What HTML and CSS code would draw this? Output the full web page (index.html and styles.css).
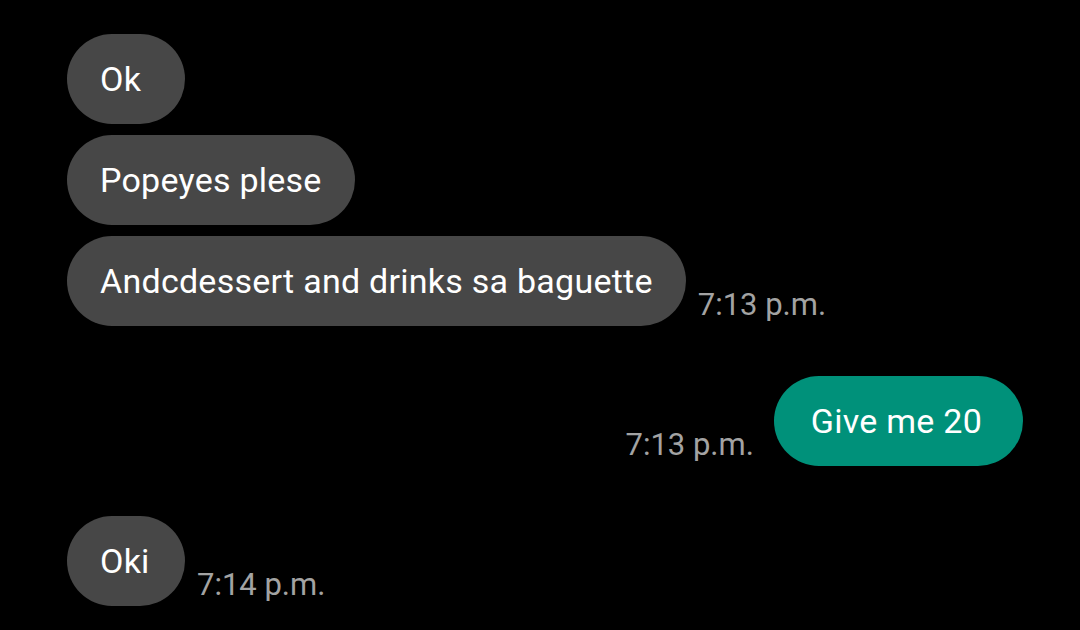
FILE: index.html
```html
<!DOCTYPE html>
<html lang="en">
<head>
    <meta charset="UTF-8">
    <meta name="viewport" content="width=device-width, initial-scale=1.0">
    <title>Messages</title>
    <link rel="stylesheet" href="styles.css">
</head>
<body>
    <div class="thread">
        <div class="group">
            <div class="row">
                <div class="bubble">Ok</div>
            </div>
            <div class="row">
                <div class="bubble">Popeyes plese</div>
            </div>
            <div class="row">
                <div class="bubble">Andcdessert and drinks sa baguette</div>
                <span class="time">7:13 p.m.</span>
            </div>
        </div>
        <div class="group">
            <div class="row sent">
                <span class="time">7:13 p.m.</span>
                <div class="bubble">Give me 20</div>
            </div>
        </div>
        <div class="group">
            <div class="row">
                <div class="bubble">Oki</div>
                <span class="time">7:14 p.m.</span>
            </div>
        </div>
    </div>
</body>
</html>
```

FILE: styles.css
```css
body {
    margin: 0;
    padding: 0;
    background-color: #000;
    font-family: Roboto, "Noto Sans", sans-serif;
    overflow: hidden;
}
.thread {
    padding: 34px 57px 0 67px;
    display: flex;
    flex-direction: column;
    gap: 50px;
}
.group {
    display: flex;
    flex-direction: column;
    gap: 11px;
}
.row {
    display: flex;
    align-items: flex-end;
}
.row.sent {
    justify-content: flex-end;
}
.bubble {
    height: 90px;
    min-width: 118px;
    box-sizing: border-box;
    padding: 0 33px;
    display: flex;
    align-items: center;
    border-radius: 45px;
    background-color: #474747;
    color: #fff;
    font-size: 34px;
    letter-spacing: 0.25px;
    white-space: nowrap;
}
.sent .bubble {
    background-color: #00917a;
    padding: 0 41px 0 37px;
}
.time {
    color: #a3a3a3;
    font-size: 31px;
    line-height: 31px;
    margin-left: 12px;
    padding-bottom: 6px;
}
.sent .time {
    margin-left: 0;
    margin-right: 20px;
}
```
